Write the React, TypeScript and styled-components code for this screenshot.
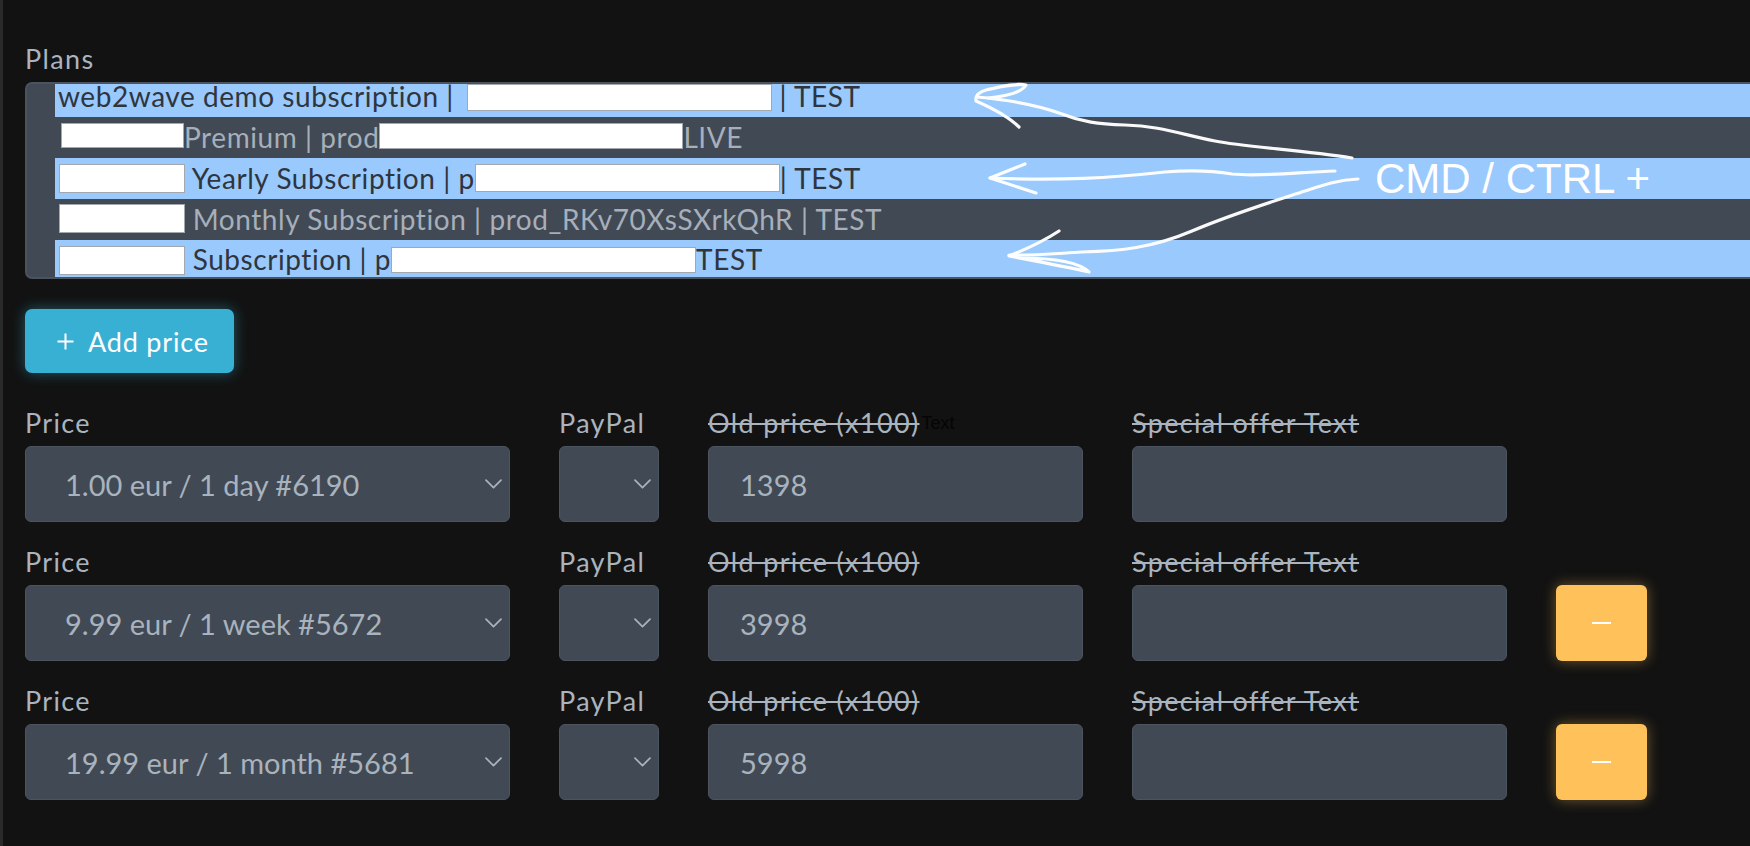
import React from "react";
import styled, { createGlobalStyle } from "styled-components";

const GlobalStyle = createGlobalStyle`
  html, body { margin: 0; padding: 0; background: #121212; overflow: hidden; }
  * { box-sizing: border-box; }
`;

const Page = styled.div`
  position: relative;
  width: 1750px;
  height: 846px;
  overflow: hidden;
  background: #121212;
  border-left: 3px solid #2a2a2a;
  padding: 43px 0 0 22px;
  font-family: Lato, "Open Sans", sans-serif;
`;

const Label = styled.div<{ $strike?: boolean }>`
  font-size: 27px;
  line-height: 30px;
  height: 30px;
  color: #aab4bf;
  letter-spacing: 0.05em;
  white-space: nowrap;
  text-decoration: ${(p) => (p.$strike ? "line-through" : "none")};
  text-decoration-thickness: 2px;
`;

const PlansLabel = styled(Label)`
  line-height: 31px;
  height: 31px;
  margin-bottom: 8px;
`;

const Struck = styled.span`
  text-decoration: line-through;
  text-decoration-thickness: 2px;
`;

const Hint = styled.span`
  font-family: "Liberation Sans", Arial, sans-serif;
  font-size: 18px;
  letter-spacing: 0;
  color: #050505;
  display: inline-block;
  vertical-align: 4px;
  margin-left: 2px;
`;

const List = styled.div`
  width: 1800px;
  height: 197px;
  border: 2px solid #4b535e;
  border-radius: 7px;
  background: #414954;
  padding-left: 28px;
`;

const Option = styled.div<{ $selected?: boolean; $h: number; $lh: number; $pl?: number }>`
  height: ${(p) => p.$h}px;
  display: flex;
  align-items: flex-start;
  padding-left: ${(p) => p.$pl ?? 1}px;
  background: ${(p) => (p.$selected ? "#99c9fd" : "transparent")};
  color: ${(p) => (p.$selected ? "#2f353d" : "#a6afba")};
  font-size: 28px;
  line-height: ${(p) => p.$lh}px;
  letter-spacing: 0.02em;
  white-space: pre;
`;

const Redact = styled.span<{ $w: number; $h: number; $top: number; $ml?: number }>`
  display: block;
  flex: none;
  width: ${(p) => p.$w}px;
  height: ${(p) => p.$h}px;
  margin-top: ${(p) => p.$top}px;
  margin-left: ${(p) => p.$ml ?? 0}px;
  background: #ffffff;
  border: 1px solid #a3a8ae;
`;

const AddButton = styled.button`
  margin-top: 30px;
  width: 209px;
  height: 64px;
  border: none;
  border-radius: 7px;
  background: #38b0d4;
  color: #ffffff;
  font-family: Lato, "Open Sans", sans-serif;
  font-size: 27px;
  letter-spacing: 0.03em;
  padding: 0 0 0 32px;
  text-align: left;
  box-shadow: 0 0 14px rgba(56, 176, 212, 0.45);
  display: flex;
  align-items: center;
  gap: 14px;
`;

const Rows = styled.div`
  margin-top: 35px;
  display: flex;
  flex-direction: column;
  gap: 25px;
`;

const Row = styled.div`
  display: grid;
  grid-template-columns: 485px 100px 375px 375px 91px;
  column-gap: 49px;
  align-items: end;
`;

const Field = styled.div`
  display: flex;
  flex-direction: column;
  gap: 8px;
`;

const SelectBox = styled.div<{ $compact?: boolean }>`
  height: 76px;
  background: #414954;
  border: 1px solid #4c5460;
  border-radius: 6px;
  display: flex;
  align-items: center;
  justify-content: ${(p) => (p.$compact ? "flex-end" : "space-between")};
  padding: 0 7px 0 39px;
  font-size: 29px;
  color: #a9b3be;
  white-space: nowrap;
`;

const TextInput = styled.input`
  height: 76px;
  width: 100%;
  background: #414954;
  border: 1px solid #4c5460;
  border-radius: 6px;
  padding: 0 0 0 31px;
  font-family: Lato, "Open Sans", sans-serif;
  font-size: 29px;
  color: #a9b3be;
  outline: none;
`;

const MinusButton = styled.button`
  height: 76px;
  width: 91px;
  border: none;
  border-radius: 6px;
  background: #ffc25a;
  box-shadow: 0 0 14px rgba(255, 194, 90, 0.4);
  display: flex;
  align-items: center;
  justify-content: center;
  padding: 0;
`;

const MinusBar = styled.span`
  display: block;
  width: 19px;
  height: 2px;
  background: #ffffff;
`;

const Overlay = styled.svg`
  position: absolute;
  left: -3px;
  top: 0;
  width: 1750px;
  height: 846px;
  pointer-events: none;
`;

const Annotation = styled.div`
  position: absolute;
  left: 1372px;
  top: 158px;
  font-family: "Liberation Sans", Arial, sans-serif;
  font-size: 42px;
  line-height: 42px;
  color: #ffffff;
  white-space: nowrap;
`;

const Chevron = () => (
  <svg width="17" height="10" viewBox="0 0 17 10" fill="none">
    <path d="M1 1.2 L8.5 8.6 L16 1.2" stroke="#a9b3be" strokeWidth="1.7" strokeLinecap="round" strokeLinejoin="round" />
  </svg>
);

const PlusIcon = () => (
  <svg width="17" height="17" viewBox="0 0 17 17" fill="none">
    <path d="M8.5 0.5 V16.5 M0.5 8.5 H16.5" stroke="#ffffff" strokeWidth="2" />
  </svg>
);

type Price = { label: string; old: string; removable: boolean; hint?: boolean };

const prices: Price[] = [
  { label: "1.00 eur / 1 day #6190", old: "1398", removable: false, hint: true },
  { label: "9.99 eur / 1 week #5672", old: "3998", removable: true },
  { label: "19.99 eur / 1 month #5681", old: "5998", removable: true },
];

export default function App() {
  return (
    <>
      <GlobalStyle />
      <Page>
        <PlansLabel>Plans</PlansLabel>
        <List>
          <Option $selected $h={33} $lh={25} $pl={3}>
            {"web2wave demo subscription | "}
            <Redact $w={305} $h={27} $top={0} $ml={5} />
            {" | TEST"}
          </Option>
          <Option $h={41} $lh={41}>
            <Redact $w={123} $h={25} $top={6} $ml={5} />
            {"Premium | prod"}
            <Redact $w={304} $h={26} $top={6} />
            {"LIVE"}
          </Option>
          <Option $selected $h={41} $lh={41}>
            <Redact $w={126} $h={29} $top={6} $ml={3} />
            {" Yearly Subscription | p"}
            <Redact $w={305} $h={28} $top={6} />
            {"| TEST"}
          </Option>
          <Option $h={41} $lh={41}>
            <Redact $w={126} $h={29} $top={5} $ml={3} />
            {" Monthly Subscription | prod_RKv70XsSXrkQhR | TEST"}
          </Option>
          <Option $selected $h={37} $lh={39}>
            <Redact $w={126} $h={29} $top={6} $ml={3} />
            {" Subscription | p"}
            <Redact $w={305} $h={26} $top={7} />
            {"TEST"}
          </Option>
        </List>

        <AddButton>
          <PlusIcon />
          <span>Add price</span>
        </AddButton>

        <Rows>
          {prices.map((p) => (
            <Row key={p.label}>
              <Field>
                <Label>Price</Label>
                <SelectBox>
                  <span>{p.label}</span>
                  <Chevron />
                </SelectBox>
              </Field>
              <Field>
                <Label>PayPal</Label>
                <SelectBox $compact>
                  <Chevron />
                </SelectBox>
              </Field>
              <Field>
                <Label>
                  <Struck>Old price (x100)</Struck>
                  {p.hint && <Hint>Text</Hint>}
                </Label>
                <TextInput defaultValue={p.old} />
              </Field>
              <Field>
                <Label $strike>Special offer Text</Label>
                <TextInput defaultValue="" />
              </Field>
              {p.removable ? (
                <MinusButton aria-label="Remove price">
                  <MinusBar />
                </MinusButton>
              ) : (
                <span />
              )}
            </Row>
          ))}
        </Rows>

        <Overlay viewBox="0 0 1750 846" fill="none">
          <g stroke="#ffffff" strokeWidth="3.2" strokeLinecap="round" strokeLinejoin="round" opacity="0.97">
            <path d="M1352 158 C1300 150 1245 147 1215 141 C1180 134 1160 126 1125 125 C1098 124 1082 122 1062 114 C1040 106 1010 100 977 97" />
            <path d="M1019 127 C1008 116 992 108 976 101 C975 95 979 92 986 90 C1000 87 1014 83 1026 85 C1022 92 1008 96 988 98" />
            <path d="M1335 171 C1300 172 1262 177 1232 174 C1208 170 1190 170 1165 172 C1110 178 1060 181 990 178" />
            <path d="M1025 164 L990 178 L1036 193" />
            <path d="M1358 179 C1336 180 1320 186 1305 191 C1268 203 1232 214 1192 231 C1152 248 1120 251 1082 252 C1050 254 1030 256 1009 255" />
            <path d="M1059 231 C1044 241 1024 250 1009 256 C1035 261 1062 266 1089 272 C1080 263 1060 258 1020 258" />
          </g>
        </Overlay>
        <Annotation>CMD / CTRL +</Annotation>
      </Page>
    </>
  );
}
